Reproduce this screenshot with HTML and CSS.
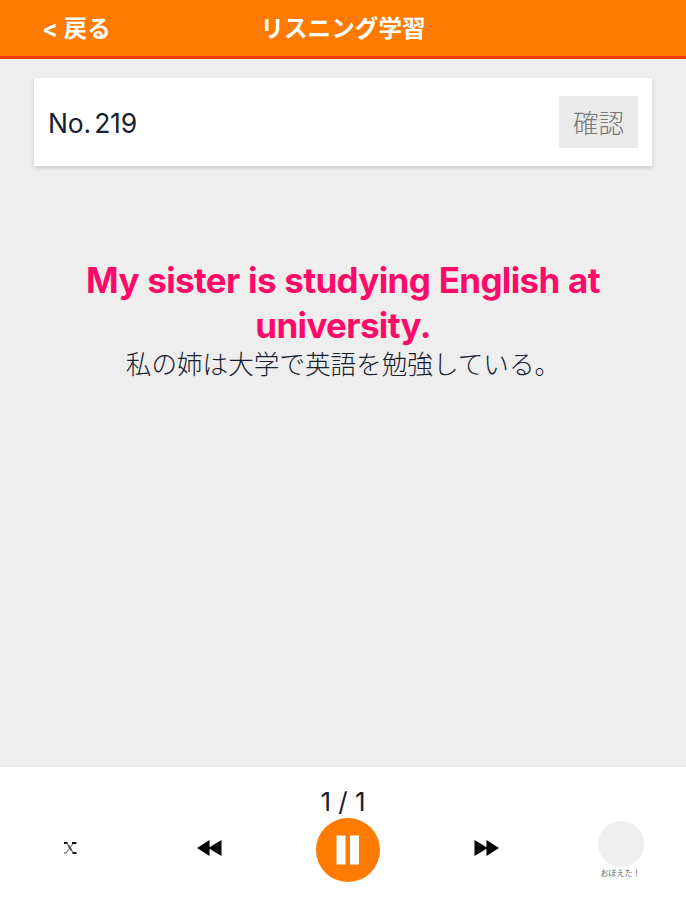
FILE: index.html
```html
<!DOCTYPE html>
<html lang="ja">
<head>
    <meta charset="UTF-8">
    <meta name="viewport" content="width=device-width, initial-scale=1.0">
    <title>リスニング学習</title>
    <link rel="stylesheet" href="styles.css">
</head>
<body>
    <div class="wrapper">
        <header class="header">
            <a class="back" href="#">&lt; 戻る</a>
            <h1 class="title">リスニング学習</h1>
        </header>

        <main class="main">
            <div class="card">
                <p class="number">No. 219</p>
                <button class="check">確認</button>
            </div>
            <div class="sentence">
                <p class="english">My sister is studying English at university.</p>
                <p class="japanese">私の姉は大学で英語を勉強している。</p>
            </div>
        </main>

        <footer class="player">
            <p class="page">1 / 1</p>
            <div class="controls">
                <button class="control small" aria-label="shuffle">
                    <svg width="14" height="14" viewBox="0 0 14 14">
                        <path d="M3.5 2l7 10M3 12l7.500-10" fill="none" stroke="#777" stroke-width="1.2"/>
                        <path d="M1 2h3.5M9 2h4.5M9.5 12h4" fill="none" stroke="#111" stroke-width="2"/>
                        <path d="M1 12h2.5" fill="none" stroke="#777" stroke-width="1.5"/>
                        <path d="M5.500 4.500l3 5" fill="none" stroke="#555" stroke-width="2"/>
                    </svg>
                </button>
                <button class="control small" aria-label="previous">
                    <svg width="25" height="18" viewBox="0 0 25 18">
                        <path d="M0 9L12.5 1v7.2L24.5 1v16L12.5 9.800V17z"/>
                    </svg>
                </button>
                <button class="control" aria-label="pause">
                    <svg width="64" height="64" viewBox="0 0 64 64">
                        <circle cx="32" cy="32" r="32" fill="#ff7a00"/>
                        <path d="M20.5 17.5h9v29h-9zM34 17.5h9v29h-9z" fill="#fff"/>
                    </svg>
                </button>
                <button class="control small" aria-label="next">
                    <svg width="25" height="18" viewBox="0 0 25 18">
                        <path d="M25 9L12.5 1v7.2L0.5 1v16l12-7.2V17z"/>
                    </svg>
                </button>
                <button class="control memory">
                    <span class="circle"></span>
                    <span class="label">おぼえた！</span>
                </button>
            </div>
        </footer>
    </div>
</body>
</html>
```

FILE: styles.css
```css
*{
    padding:0;
    margin:0;
    box-sizing:border-box;
}
body{
    font-family:Inter, "Noto Sans CJK JP", sans-serif;
    color:#17202e;
}
button{
    border:none;
    background:none;
    font-family:inherit;
}
.wrapper{
    height:100vh;
    display:flex;
    flex-direction:column;
    background-color:#eee;
}
.header{
    height:59px;
    display:grid;
    grid-template-columns:1fr auto 1fr;
    align-items:center;
    padding:1px 42px 0;
    background-color:#ff7a00;
    border-bottom:3px solid #f23c0c;
}
.back,
.title{
    color:#fff;
    font-size:23.6px;
    font-weight:700;
    line-height:32px;
    text-decoration:none;
}
.main{
    flex:1;
    padding:19px 34px 0;
}
.card{
    height:88px;
    display:flex;
    align-items:center;
    justify-content:space-between;
    padding:0 14px;
    background-color:#fff;
    box-shadow:0 2px 4px rgba(0,0,0,0.15);
}
.number{
    padding-top:1px;
    font-size:26.5px;
    letter-spacing:-0.2px;
    word-spacing:-4px;
}
.check{
    width:79px;
    height:52px;
    padding-bottom:2px;
    background-color:#ebebeb;
    color:#777;
    font-size:25.6px;
    font-weight:300;
}
.sentence{
    padding:92px 40px 0;
    text-align:center;
}
.english{
    color:#ff0a68;
    font-size:35px;
    font-weight:700;
    line-height:45px;
    letter-spacing:-0.65px;
    word-spacing:0.8px;
}
.japanese{
    font-size:25.6px;
    font-weight:300;
    line-height:34px;
}
.player{
    height:134px;
    padding-top:19px;
    background-color:#fff;
    border-top:1px solid #e6e6e6;
}
.page{
    font-size:26px;
    line-height:32px;
    text-align:center;
}
.controls{
    height:64px;
    display:grid;
    grid-template-columns:139px 140px 138px 138px 131px;
}
.control{
    display:flex;
    align-items:center;
    justify-content:center;
}
.small{
    padding-bottom:4px;
}
.memory{
    flex-direction:column;
}
.circle{
    width:46px;
    height:46px;
    border-radius:50%;
    background-color:#eee;
}
.label{
    color:#666;
    font-size:8px;
    line-height:12px;
}
```
